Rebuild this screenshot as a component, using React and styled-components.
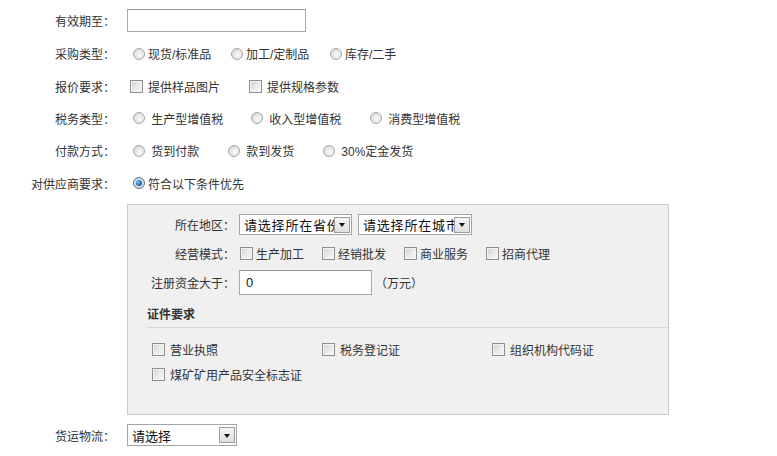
import React from "react";
import styled, { createGlobalStyle, css } from "styled-components";

const Global = createGlobalStyle`
  html, body { margin: 0; padding: 0; background: #fff; }
  body {
    font-family: "Liberation Sans", "Noto Sans CJK SC", sans-serif;
    font-size: 12px;
    color: #333;
  }
`;

const Form = styled.div`
  padding-top: 4px;
  width: 777px;
`;

const Row = styled.div`
  display: flex;
  align-items: center;
  height: ${(p) => p.$h || 33}px;
`;

const Label = styled.div`
  width: ${(p) => p.$w || 115}px;
  flex: none;
  text-align: right;
  margin-right: ${(p) => p.$gap ?? 12}px;
  white-space: nowrap;
`;

const TextBox = styled.div`
  box-sizing: border-box;
  width: ${(p) => p.$w}px;
  height: ${(p) => p.$h}px;
  border: 1px solid #a9a9a9;
  border-top-color: #999;
  background: #fff;
  padding-left: 6px;
  display: flex;
  align-items: center;
  color: #222;
  font-size: 13px;
`;

const Options = styled.div`
  display: flex;
  align-items: center;
  padding-left: ${(p) => p.$pad || 0}px;
`;

const Option = styled.label`
  display: flex;
  align-items: center;
  width: ${(p) => (p.$w ? `${p.$w}px` : "auto")};
  flex: none;
  white-space: nowrap;
`;

const Radio = styled.span`
  box-sizing: border-box;
  width: 12px;
  height: 12px;
  border-radius: 50%;
  border: 1px solid #a6a6a6;
  background: radial-gradient(circle at 60% 60%, #fafafa 0%, #e4e4e4 55%, #cfcfcf 100%);
  margin-right: 3px;
  flex: none;
  display: flex;
  align-items: center;
  justify-content: center;
  ${(p) =>
    p.$checked &&
    css`
      border-color: #5b6f86;
      background: radial-gradient(circle, #e8eef4 0%, #c7d1dc 100%);
      &::after {
        content: "";
        width: 6px;
        height: 6px;
        border-radius: 50%;
        background: radial-gradient(circle at 35% 35%, #7ec0f0 0%, #1a6cb5 60%, #0c3f77 100%);
      }
    `}
`;

const Check = styled.span`
  box-sizing: border-box;
  width: 13px;
  height: 13px;
  border: 1px solid #8e8f8f;
  background: linear-gradient(135deg, #cfcfcf 0%, #e9e9e9 50%, #fbfbfb 100%);
  box-shadow: inset 0 0 0 1px #f4f4f4;
  margin-right: ${(p) => p.$gap ?? 5}px;
  flex: none;
`;

const Select = styled.div`
  box-sizing: border-box;
  width: ${(p) => p.$w}px;
  height: ${(p) => p.$h || 21}px;
  border: 1px solid #a5a5a5;
  background: #fff;
  display: flex;
  align-items: center;
  margin-right: ${(p) => p.$mr || 0}px;
  flex: none;
`;

const SelectText = styled.span`
  flex: 1;
  min-width: 0;
  overflow: hidden;
  white-space: nowrap;
  padding-left: 4px;
  font-size: 13px;
  color: #111;
  letter-spacing: ${(p) => p.$ls || 0}px;
`;

const Arrow = styled.span`
  box-sizing: border-box;
  width: 16px;
  height: 16px;
  margin-right: 1px;
  border: 1px solid #9a9a9a;
  background: linear-gradient(180deg, #f6f6f6 0%, #dedede 100%);
  display: flex;
  align-items: center;
  justify-content: center;
  flex: none;
  &::after {
    content: "";
    border-left: 3.5px solid transparent;
    border-right: 3.5px solid transparent;
    border-top: 4px solid #111;
    margin-top: 1px;
  }
`;

const Panel = styled.div`
  box-sizing: border-box;
  margin: 5px 0 0 127px;
  width: 542px;
  height: 211px;
  background: #f0f0f0;
  border: 1px solid #cccccc;
  padding-top: 5px;
`;

const Unit = styled.span`
  margin-left: 3px;
  color: #333;
`;

const SectionTitle = styled.div`
  margin: 8px 0 0 19px;
  padding-bottom: 5px;
  font-weight: bold;
  color: #333;
  border-bottom: 1px dotted #c4c4c4;
`;

const CertGrid = styled.div`
  display: grid;
  grid-template-columns: repeat(3, 170px);
  grid-auto-rows: 25px;
  align-items: center;
  margin: 9px 0 0 24px;
`;

const Bottom = styled.div`
  margin-top: 9px;
`;

function SelectBox({ w, h, text, mr, ls }) {
  return (
    <Select $w={w} $h={h} $mr={mr}>
      <SelectText $ls={ls}>{text}</SelectText>
      <Arrow />
    </Select>
  );
}

export default function App() {
  return (
    <>
      <Global />
      <Form>
        <Row>
          <Label>有效期至：</Label>
          <TextBox $w={179} $h={23} />
        </Row>
        <Row>
          <Label>采购类型：</Label>
          <Options $pad={6}>
            <Option $w={98}><Radio />现货/标准品</Option>
            <Option $w={99}><Radio />加工/定制品</Option>
            <Option><Radio />库存/二手</Option>
          </Options>
        </Row>
        <Row $h={32}>
          <Label>报价要求：</Label>
          <Options $pad={3}>
            <Option $w={119}><Check />提供样品图片</Option>
            <Option><Check />提供规格参数</Option>
          </Options>
        </Row>
        <Row $h={32}>
          <Label>税务类型：</Label>
          <Options $pad={6}>
            <Option $w={118}><Radio />&nbsp;生产型增值税</Option>
            <Option $w={119}><Radio />&nbsp;收入型增值税</Option>
            <Option><Radio />&nbsp;消费型增值税</Option>
          </Options>
        </Row>
        <Row>
          <Label>付款方式：</Label>
          <Options $pad={6}>
            <Option $w={95}><Radio />&nbsp;货到付款</Option>
            <Option $w={95}><Radio />&nbsp;款到发货</Option>
            <Option><Radio />&nbsp;30%定金发货</Option>
          </Options>
        </Row>
        <Row $h={32}>
          <Label>对供应商要求：</Label>
          <Options $pad={6}>
            <Option><Radio $checked />符合以下条件优先</Option>
          </Options>
        </Row>

        <Panel>
          <Row $h={29}>
            <Label $w={107} $gap={4}>所在地区：</Label>
            <SelectBox w={113} text="请选择所在省份" mr={6} ls={0.8} />
            <SelectBox w={114} text="请选择所在城市" ls={0.8} />
          </Row>
          <Row $h={29}>
            <Label $w={107} $gap={4}>经营模式：</Label>
            <Options $pad={1}>
              <Option $w={82}><Check $gap={3} />生产加工</Option>
              <Option $w={82}><Check $gap={3} />经销批发</Option>
              <Option $w={82}><Check $gap={3} />商业服务</Option>
              <Option><Check $gap={3} />招商代理</Option>
            </Options>
          </Row>
          <Row $h={29}>
            <Label $w={107} $gap={4}>注册资金大于：</Label>
            <TextBox $w={133} $h={25}>0</TextBox>
            <Unit>（万元）</Unit>
          </Row>
          <SectionTitle>证件要求</SectionTitle>
          <CertGrid>
            <Option><Check />营业执照</Option>
            <Option><Check />税务登记证</Option>
            <Option><Check />组织机构代码证</Option>
            <Option><Check />煤矿矿用产品安全标志证</Option>
          </CertGrid>
        </Panel>

        <Bottom>
          <Row $h={22}>
            <Label>货运物流：</Label>
            <SelectBox w={110} h={22} text="请选择" />
          </Row>
        </Bottom>
      </Form>
    </>
  );
}
